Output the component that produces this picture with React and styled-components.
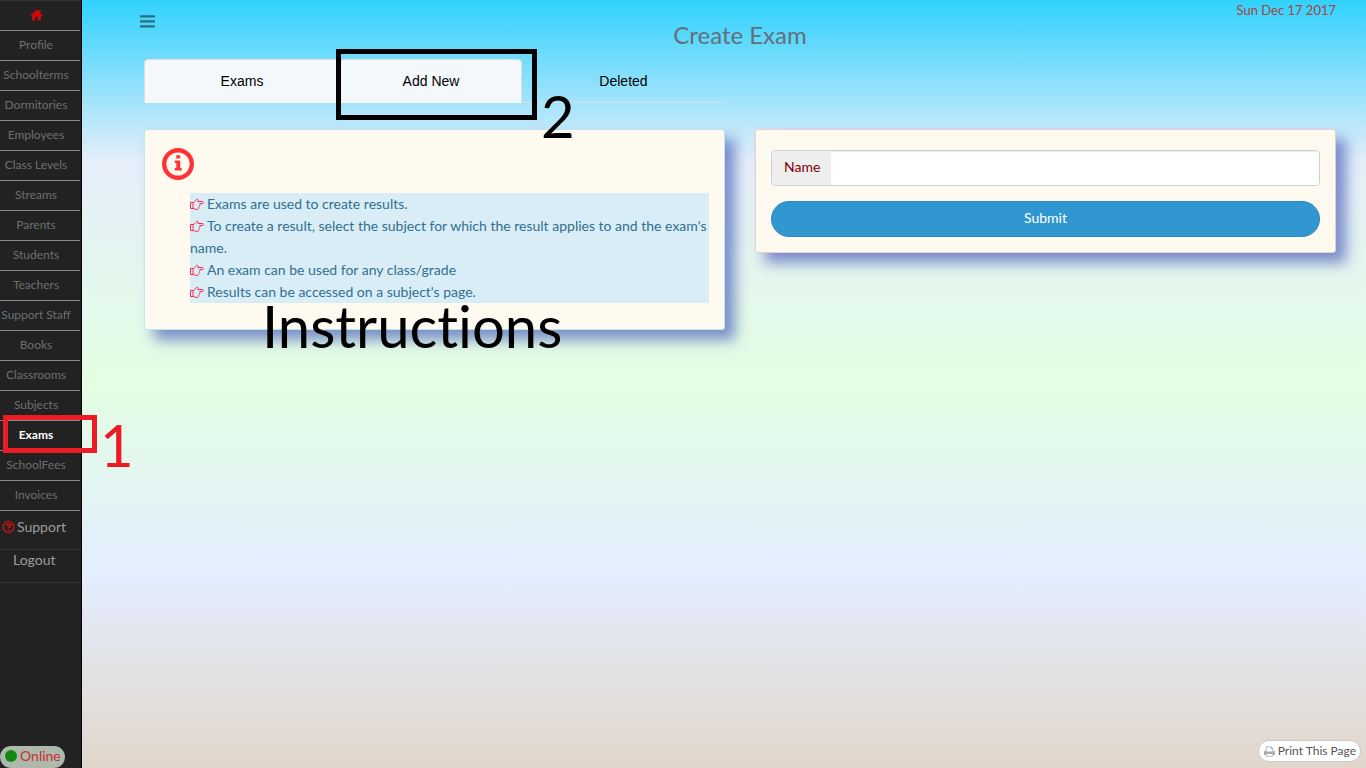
import React from "react";
import styled, { createGlobalStyle, css } from "styled-components";

const GlobalStyle = createGlobalStyle`
  *, *::before, *::after { box-sizing: border-box; }
  body {
    margin: 0;
    font-family: Lato, "Open Sans", sans-serif;
    font-size: 14px;
    line-height: 22px;
    color: #333;
  }
  a { text-decoration: none; color: inherit; }
`;

const Page = styled.div`
  display: flex;
  min-height: 100vh;
  background: linear-gradient(to bottom, #30d2fd 0%, #e5eefa 21%, #e3fee2 50%, #e3edff 75%, #e1d6ca 100%);
`;

const Sidebar = styled.nav`
  display: flex;
  flex-direction: column;
  flex: none;
  width: 82px;
  background: #222;
  border-right: 1px solid #000;
`;

const NavLink = styled.a`
  position: relative;
  display: flex;
  align-items: center;
  justify-content: center;
  height: 30px;
  margin-right: 1px;
  padding: 0 8px 2px 0;
  border-bottom: 1px solid #888;
  font-size: 12px;
  white-space: nowrap;
  color: ${(p) => (p.$active ? "#fff" : "#6c7071")};
  font-weight: ${(p) => (p.$active ? 700 : 400)};
  &:first-child { height: 31px; border-top: 1px solid #333; }
`;

const FootLink = styled.a`
  display: flex;
  align-items: center;
  gap: 2px;
  height: ${(p) => (p.$tall ? 39 : 33)}px;
  padding: ${(p) => (p.$tall ? "0 0 6px 2px" : "0 0 12px 13px")};
  border-bottom: 1px solid #333;
  color: #9d9d9d;
`;

const Online = styled.div`
  display: flex;
  align-items: center;
  gap: 3px;
  align-self: flex-start;
  margin-top: auto;
  height: 22px;
  padding: 0 4px 2px 5px;
  border-radius: 11px;
  background: #acb9ac;
  color: #c9302c;
`;

const Dot = styled.span`
  width: 12px;
  height: 12px;
  border-radius: 50%;
  background: #128a12;
`;

const Main = styled.main`
  display: flex;
  flex-direction: column;
  flex: 1;
  min-width: 0;
  padding: 0 30px 0 62px;
`;

const TopBar = styled.header`
  display: grid;
  grid-template-columns: 1fr auto 1fr;
  height: 59px;
`;

const MenuButton = styled.button`
  justify-self: start;
  align-self: start;
  display: flex;
  margin: 14px 0 0 -5px;
  padding: 0;
  border: 0;
  background: none;
`;

const Title = styled.h1`
  margin: 20px 0 0;
  font-size: 24px;
  line-height: 30px;
  font-weight: 400;
  color: #63707a;
`;

const Today = styled.time`
  justify-self: end;
  font-size: 13px;
  line-height: 20px;
  color: #a94442;
`;

const Columns = styled.div`
  display: grid;
  grid-template-columns: 1fr 1fr;
  align-items: start;
  column-gap: 30px;
`;

const Tabs = styled.div`
  display: grid;
  grid-template-columns: 196fr 182fr 203fr;
  height: 44px;
  margin-bottom: 26px;
  font-family: "Liberation Sans", Arial, sans-serif;
`;

const Tab = styled.a`
  position: relative;
  display: flex;
  align-items: center;
  justify-content: center;
  border: 1px solid #ddd;
  border-bottom-color: #f4f8fb;
  border-radius: 4px 4px 0 0;
  background: #f4f8fb;
  color: #000;
  ${(p) => p.$plain && css`
    background: none;
    border-color: transparent transparent #ddd;
  `}
`;

const Panel = styled.div`
  position: relative;
  border: 1px solid ${(p) => p.$edge};
  border-radius: 3px;
  background: #fffaf0;
  box-shadow: 10px 10px 14px rgba(57, 77, 179, 0.62);
`;

const InfoPanel = styled(Panel)`
  padding: 17px 15px 26px 16px;
`;

const FormPanel = styled(Panel)`
  padding: 20px 15px 15px;
`;

const Hints = styled.ul`
  margin: 12px 0 0 29px;
  padding: 0;
  list-style: none;
  background: #d9edf7;
  color: #31708f;
`;

const InputGroup = styled.div`
  display: flex;
  height: 36px;
  margin-bottom: 15px;
  border: 1px solid #ccd0d2;
  border-radius: 4px;
  overflow: hidden;
  background: #fff;
`;

const Label = styled.label`
  display: flex;
  align-items: center;
  padding: 0 11px 2px 12px;
  background: #eee;
  color: maroon;
`;

const Input = styled.input`
  flex: 1;
  min-width: 0;
  padding: 6px 12px;
  border: 0;
  outline: 0;
  font: inherit;
  box-shadow: inset 0 1px 1px rgba(0, 0, 0, 0.08);
`;

const Submit = styled.button`
  display: block;
  width: 100%;
  height: 36px;
  padding: 0 0 2px;
  border: 1px solid #2a88bd;
  border-radius: 18px;
  background: #3097d1;
  color: #fff;
  font: inherit;
`;

const PrintButton = styled.button`
  display: flex;
  align-items: center;
  gap: 3px;
  align-self: flex-end;
  height: 22px;
  margin: auto -25px 6px 0;
  padding: 0 4px 0 5px;
  border: 1px solid #ccc;
  border-radius: 11px;
  background: #fff;
  color: #555;
  font: inherit;
  font-size: 12px;
`;

const Marker = styled.span`
  position: absolute;
  z-index: 2;
  border: 5px solid ${(p) => p.$color};
  pointer-events: none;
`;

const NavMarker = styled(Marker)`
  left: 3px;
  top: -6px;
  width: 94px;
  height: 38px;
`;

const TabMarker = styled(Marker)`
  left: -5px;
  top: -11px;
  width: 201px;
  height: 71px;
`;

const Note = styled.span`
  position: absolute;
  z-index: 2;
  left: ${(p) => p.$left}px;
  top: ${(p) => p.$top}px;
  font-family: Lato, sans-serif;
  font-size: 58px;
  line-height: 60px;
  font-weight: 400;
  font-variant-ligatures: none;
  color: ${(p) => p.$color || "#000"};
  pointer-events: none;
`;

const HandSvg = styled.svg`
  vertical-align: -2px;
  margin-right: 3px;
`;

const InfoSvg = styled.svg`
  display: block;
`;

const HomeIcon = () => (
  <svg width="13" height="12" viewBox="0 0 13 12" fill="#c9090b" aria-hidden="true">
    <path d="M6.5 0.6 8.6 2.6V1h2v3.5L13 6.9H11V11.5H7.8V7.8H5.2v3.7H2V6.9H0Z" />
  </svg>
);

const HelpIcon = () => (
  <svg width="13" height="14" viewBox="0 0 13 14" fill="none" stroke="#c11414" aria-hidden="true">
    <circle cx="6.5" cy="7" r="5.4" strokeWidth="1.5" />
    <path d="M4.5 5.6C4.9 3.5 8.6 3.6 8.5 5.6 8.4 6.8 6.6 6.8 6.6 8.3M6.6 9.2V10.6" strokeWidth="1.8" />
  </svg>
);

const BarsIcon = () => (
  <svg width="17" height="16" viewBox="0 0 17 16" fill="#2e6d80" aria-hidden="true">
    <rect x="1" y="1.2" width="15" height="2.4" rx=".6" />
    <rect x="1" y="6.2" width="15" height="2.4" rx=".6" />
    <rect x="1" y="11.2" width="15" height="2.4" rx=".6" />
  </svg>
);

const InfoIcon = () => (
  <InfoSvg width="34" height="34" viewBox="0 0 34 34" fill="#f33" aria-hidden="true">
    <circle cx="17" cy="17" r="13.8" fill="none" stroke="#f33" strokeWidth="4.4" />
    <path d="M15.2 8.2h4v3.4h-4zM13.8 13.4h5.4v7.6h1.5v2.6h-6.9V21h1.5v-5h-1.5z" />
  </InfoSvg>
);

const HandIcon = () => (
  <HandSvg width="14" height="13" viewBox="0 0 14 13" fill="none" stroke="#ff2f4c" strokeWidth="1" strokeLinejoin="round" aria-hidden="true">
    <path d="M.5 4.5H3V10.5H.5ZM3 4.5C4.8 4.3 5.2 2.8 6.1 1.8 6.8 1 8.3 1.2 8.2 2.4 8.1 3 7.8 3.1 7.6 3.5H12.3C13.8 3.5 13.8 5.6 12.3 5.6H9.7C10.3 6.5 10 7.3 9.3 7.7 9.6 8.5 9.3 9.2 8.6 9.5 8.8 10.8 8.2 11.5 7 11.5 5.2 11.5 4.4 10.5 3 10.5" />
  </HandSvg>
);

const PrintIcon = () => (
  <svg width="11" height="11" viewBox="0 128 1664 1536" fill="#aaa" aria-hidden="true">
    <path d="M384 1536h896v-256h-896v256zM384 896h896v-384h-160q-40 0-68-28t-28-68v-160h-640v640zM1536 960q0-26-19-45t-45-19-45 19-19 45 19 45 45 19 45-19 19-45zM1664 960v416q0 13-9.5 22.5t-22.5 9.5h-224v160q0 40-28 68t-68 28h-960q-40 0-68-28t-28-68v-160h-224q-13 0-22.5-9.5t-9.5-22.5v-416q0-79 56.5-135.5t135.5-56.5h64v-544q0-40 28-68t68-28h672q40 0 88 20t76 48l152 152q28 28 48 76t20 88v256h64q79 0 135.5 56.5t56.5 135.5z" />
  </svg>
);

const LINKS = [
  "Profile", "Schoolterms", "Dormitories", "Employees", "Class Levels", "Streams",
  "Parents", "Students", "Teachers", "Support Staff", "Books", "Classrooms",
  "Subjects", "Exams", "SchoolFees", "Invoices",
];

const HINTS = [
  "Exams are used to create results.",
  "To create a result, select the subject for which the result applies to and the exam's name.",
  "An exam can be used for any class/grade",
  "Results can be accessed on a subject's page.",
];

export default function App() {
  return (
    <>
      <GlobalStyle />
      <Page>
        <Sidebar>
          <NavLink href="#home" aria-label="Home"><HomeIcon /></NavLink>
          {LINKS.map((name) => (
            <NavLink key={name} href="#" $active={name === "Exams"}>
              {name}
              {name === "Exams" && (
                <>
                  <NavMarker $color="#ed1c24" />
                  <Note $left={100} $top={-6} $color="#ed1c24">1</Note>
                </>
              )}
            </NavLink>
          ))}
          <FootLink href="#support" $tall><HelpIcon />Support</FootLink>
          <FootLink href="#logout">Logout</FootLink>
          <Online><Dot />Online</Online>
        </Sidebar>
        <Main>
          <TopBar>
            <MenuButton type="button" aria-label="Toggle menu"><BarsIcon /></MenuButton>
            <Title>Create Exam</Title>
            <Today dateTime="2017-12-17">Sun Dec 17 2017</Today>
          </TopBar>
          <Columns>
            <Tabs>
              <Tab href="#exams">Exams</Tab>
              <Tab href="#new">
                Add New
                <TabMarker $color="#000" />
                <Note $left={200} $top={26}>2</Note>
              </Tab>
              <Tab href="#deleted" $plain>Deleted</Tab>
            </Tabs>
          </Columns>
          <Columns>
            <InfoPanel $edge="#bce8f1">
              <InfoIcon />
              <Hints>
                {HINTS.map((hint) => (
                  <li key={hint}><HandIcon />{hint}</li>
                ))}
              </Hints>
              <Note $left={117} $top={166}>Instructions</Note>
            </InfoPanel>
            <FormPanel as="form" $edge="#ebccd1">
              <InputGroup>
                <Label htmlFor="exam-name">Name</Label>
                <Input id="exam-name" type="text" />
              </InputGroup>
              <Submit type="button">Submit</Submit>
            </FormPanel>
          </Columns>
          <PrintButton type="button"><PrintIcon />Print This Page</PrintButton>
        </Main>
      </Page>
    </>
  );
}
